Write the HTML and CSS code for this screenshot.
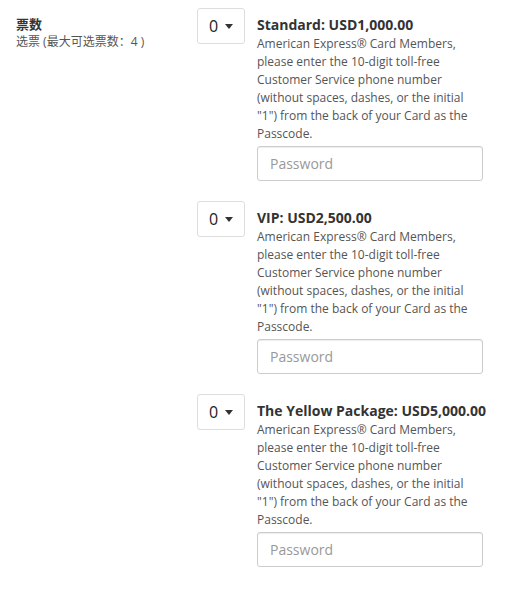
FILE: index.html
```html
<!DOCTYPE html>
<html lang="zh">
<head>
<meta charset="utf-8">
<link rel="stylesheet" href="styles.css">
</head>
<body>
<div class="form-row">
  <div class="label-col">
    <div class="label-title">票数</div>
    <div class="label-sub">选票 (最大可选票数：4 )</div>
  </div>
  <div class="tickets">
    <div class="ticket">
      <div class="qty"><span class="qty-val">0</span><span class="caret"></span></div>
      <div class="info">
        <div class="t-title">Standard: USD1,000.00</div>
        <div class="t-desc">American Express® Card Members, please enter the 10-digit toll-free Customer Service phone number (without spaces, dashes, or the initial "1") from the back of your Card as the Passcode.</div>
        <input class="pw" type="text" placeholder="Password">
      </div>
    </div>
    <div class="ticket">
      <div class="qty"><span class="qty-val">0</span><span class="caret"></span></div>
      <div class="info">
        <div class="t-title">VIP: USD2,500.00</div>
        <div class="t-desc">American Express® Card Members, please enter the 10-digit toll-free Customer Service phone number (without spaces, dashes, or the initial "1") from the back of your Card as the Passcode.</div>
        <input class="pw" type="text" placeholder="Password">
      </div>
    </div>
    <div class="ticket">
      <div class="qty"><span class="qty-val">0</span><span class="caret"></span></div>
      <div class="info">
        <div class="t-title">The Yellow Package: USD5,000.00</div>
        <div class="t-desc">American Express® Card Members, please enter the 10-digit toll-free Customer Service phone number (without spaces, dashes, or the initial "1") from the back of your Card as the Passcode.</div>
        <input class="pw" type="text" placeholder="Password">
      </div>
    </div>
  </div>
</div>
</body>
</html>
```

FILE: styles.css
```css
html, body {
  margin: 0;
  padding: 0;
  background: #fff;
}
body {
  font-family: "Open Sans", "Noto Sans CJK SC", sans-serif;
  color: #333;
}
.form-row {
  display: flex;
  padding: 8px 0 0 16px;
}
.label-col {
  width: 181px;
  padding-top: 6px;
}
.label-title {
  font-size: 13px;
  font-weight: 700;
  line-height: 20px;
  color: #333;
}
.label-sub {
  font-size: 12px;
  line-height: 16px;
  color: #555;
}
.tickets {
  display: flex;
  flex-direction: column;
  gap: 20px;
}
.ticket {
  display: flex;
  gap: 12px;
}
.qty {
  box-sizing: border-box;
  width: 48px;
  height: 36px;
  border: 1px solid #ddd;
  border-radius: 3px;
  display: flex;
  align-items: center;
  padding-left: 11px;
  gap: 7px;
  font-size: 16px;
  color: #222;
}
.caret {
  width: 0;
  height: 0;
  border-left: 4.5px solid transparent;
  border-right: 4.5px solid transparent;
  border-top: 5px solid #333;
}
.info {
  width: 226px;
  padding-top: 7px;
}
.t-title {
  font-size: 14px;
  font-weight: 700;
  line-height: 20px;
  color: #333;
  white-space: nowrap;
}
.t-desc {
  font-size: 12px;
  line-height: 18px;
  color: #555;
}
.pw {
  display: block;
  box-sizing: border-box;
  width: 226px;
  height: 35px;
  margin-top: 3px;
  border: 1px solid #ccc;
  border-radius: 3px;
  padding: 6px 12px;
  font-family: "Open Sans", sans-serif;
  font-size: 14px;
  color: #555;
  box-shadow: inset 0 1px 1px rgba(0,0,0,0.075);
}
.pw::placeholder {
  color: #999;
}
```
